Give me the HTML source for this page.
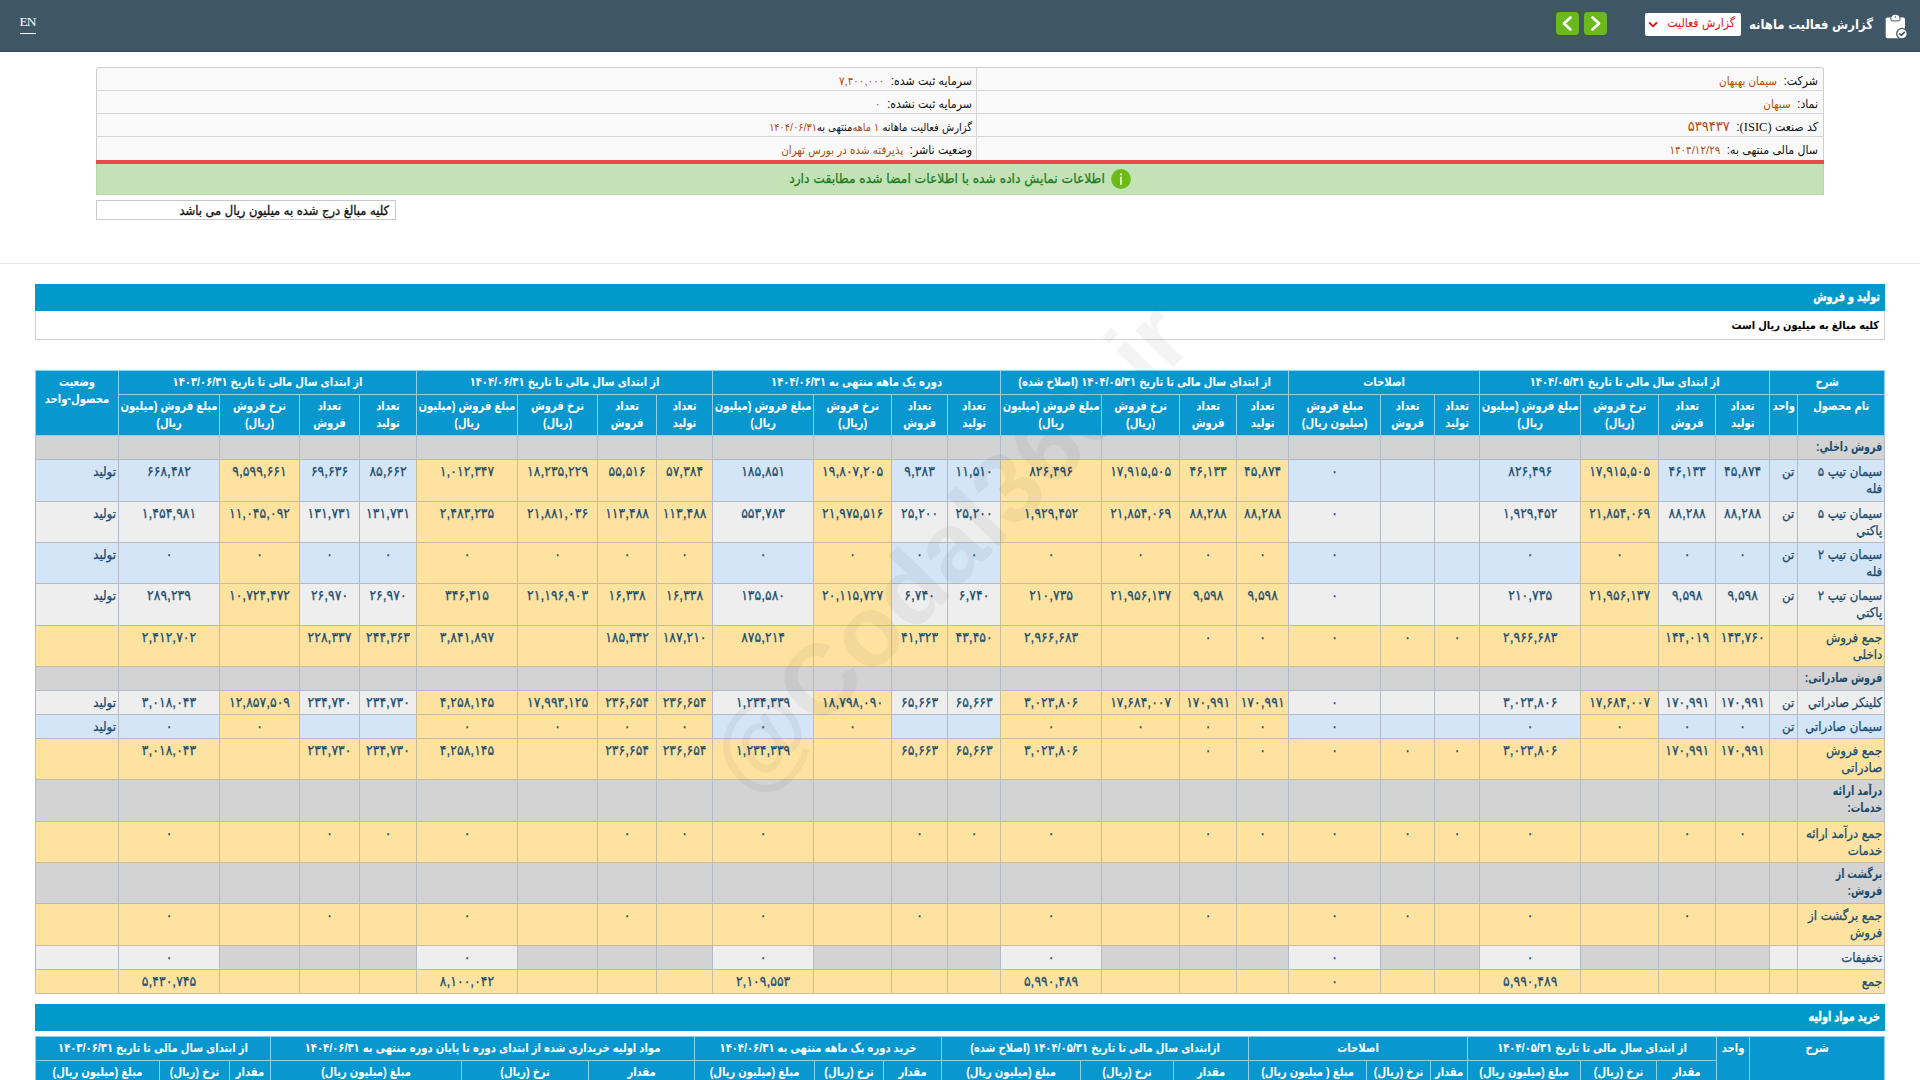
<!DOCTYPE html>
<html lang="fa" dir="rtl">
<head>
<meta charset="utf-8">
<title>گزارش فعالیت ماهانه</title>
<style>
html,body{margin:0;padding:0;}
body{width:1920px;height:1080px;overflow:hidden;position:relative;background:#fff;direction:rtl;
  font-family:"Liberation Sans","DejaVu Sans Condensed","DejaVu Sans",sans-serif;font-size:12px;color:#000;}
#topbar{position:absolute;left:0;top:0;width:1920px;height:51px;background:#3e5665;border-bottom:1px solid #35495a;}
#en{position:absolute;left:20px;top:14px;width:16px;height:19px;border-bottom:1px solid #fff;color:#fff;
  font-family:"Liberation Serif",serif;font-size:13.500px;letter-spacing:-.9px;line-height:15px;text-align:center;direction:ltr;white-space:nowrap;text-indent:-1px;}
#clip{position:absolute;left:1884px;top:13px;}
#title{position:absolute;right:47px;top:13px;height:24px;line-height:24px;color:#fff;font-weight:bold;font-size:13px;white-space:nowrap;}
#sel{z-index:2;position:absolute;left:1645px;top:13px;width:96px;height:23px;background:#fff;border-radius:2px;box-sizing:border-box;}
#sel span{position:absolute;right:6px;top:0;line-height:21px;color:#e01010;font-size:12.200px;white-space:nowrap;}
#sel svg{position:absolute;left:3px;top:8px;}
.nav{position:absolute;top:12px;width:23px;height:23px;background:#6cb81f;border-radius:4px;}
.nav svg{display:block;}
#nav1{left:1584px;}
#nav2{left:1556px;}

#info{position:absolute;left:96px;top:67px;width:1728px;height:93px;box-sizing:border-box;border:1px solid #cfcfcf;border-bottom:none;background:#f9f9f9;border-radius:3px 3px 0 0;}
.irow{position:relative;height:23px;box-sizing:border-box;border-bottom:1px solid #d6d6d6;}
.irow:last-child{border-bottom:none;}
.ir{position:absolute;right:0;top:0;width:847px;height:100%;box-sizing:border-box;padding:4px 5px 0 0;border-left:1px solid #d6d6d6;white-space:nowrap;}
.il{position:absolute;left:0;top:0;width:879px;height:100%;box-sizing:border-box;padding:4px 4px 0 0;white-space:nowrap;}
.lb{color:#111;font-size:12.200px;line-height:18px;}
.vl{color:#b34a14;font-size:11.500px;line-height:18px;margin-right:3px;}
.vl.v0{margin-right:0;}
.sm .lb{font-size:11.100px;}
.sm .vl{font-size:10.800px;}
.vl.vbig{font-size:14.500px;line-height:16px;}
.lat{font-family:"Liberation Serif",serif;font-size:12.500px;}
#redline{position:absolute;left:96px;top:160px;width:1728px;height:4px;background:#e9494b;}
#green{position:absolute;left:96px;top:164px;width:1728px;height:31px;background:#c3e3b6;box-sizing:border-box;border:1px solid #b9d9ac;border-top:none;text-align:center;white-space:nowrap;}
#gi{display:inline-block;vertical-align:middle;width:20px;height:20px;margin-left:6px;margin-top:5px;}
#gt{display:inline-block;vertical-align:middle;margin-top:3px;color:#1f7a1f;font-size:13.700px;-webkit-text-stroke:.25px #1f7a1f;}
#note{position:absolute;left:96px;top:200px;width:300px;height:20px;box-sizing:border-box;border:1px solid #c8c8c8;padding:0 6px 0 0;line-height:19px;font-size:12.800px;-webkit-text-stroke:.3px #111;color:#111;text-align:right;white-space:nowrap;}
#hr{position:absolute;left:0;top:263px;width:1920px;height:1px;background:#e8e8e8;}
.tbar{position:absolute;left:35px;width:1850px;height:27px;background:#0099cc;color:#fff;font-weight:bold;font-size:10.800px;line-height:26px;box-sizing:border-box;padding-right:5px;text-align:right;white-space:nowrap;}
.tbar span{display:inline-block;transform:scaleY(1.220);transform-origin:50% 60%;-webkit-text-stroke:.3px #fff;}
#tb1{top:284px;}
#tb2{top:1004px;}
#sub1{position:absolute;left:35px;top:311px;width:1850px;height:29px;box-sizing:border-box;border:1px solid #d0d0d0;border-top:none;background:#fff;font-weight:bold;font-size:11px;line-height:28px;padding-right:5px;text-align:right;white-space:nowrap;}

table{position:absolute;left:35px;border-collapse:collapse;table-layout:fixed;width:1849px;direction:rtl;}
#t1{top:370px;}
#t2{top:1036px;}
th{background:#0898cf;color:#fff;font-weight:bold;font-size:11.100px;line-height:17px;border:1px solid #8fd0ec;padding:0;text-align:center;vertical-align:middle;overflow:hidden;white-space:nowrap;}
th{position:relative;z-index:3;}
th.vt{vertical-align:top;padding-top:3px;}
th span{display:inline-block;transform:scaleY(1.120);transform-origin:50% 70%;}
tr.h1{height:24px;}
tr.h2{height:41px;}
tr.k1{height:24px;}
tr.k2{height:24px;}
td{border:1px solid #b3bac6;-webkit-text-stroke:.25px #1a4c6e;padding:3px 0 0 0;font-size:13.100px;line-height:17px;color:#1a4c6e;text-align:center;vertical-align:top;overflow:hidden;box-sizing:border-box;white-space:nowrap;}
td.nm,td.sec{text-align:right;padding-right:2px;}
td.st{text-align:right;padding-right:2px;}
td.sec{font-weight:bold;font-size:10.600px;-webkit-text-stroke:0;}
td.sec span{display:inline-block;transform:scaleY(1.200);transform-origin:50% 72%;}
td.v{font-size:13.800px;}
td.un{text-align:right;padding-right:3px;}
td.b{background:#d3e5f6;}
td.g{background:#eeeeee;}
td.y{background:#fee3a0;border-color:#c8bd9c;}
td.s{background:#d3d3d3;}
td.k{background:#d3d3d3;}
#wm{z-index:2;position:absolute;left:598px;top:493px;width:700px;height:110px;line-height:110px;text-align:center;direction:ltr;font-family:"Liberation Sans",sans-serif;font-size:100px;font-weight:bold;color:rgba(0,0,0,.045);transform:rotate(-45.700deg);white-space:nowrap;pointer-events:none;}

</style>
</head>
<body>
<div id="topbar">
  <a id="en">EN</a>
  <svg id="clip" viewBox="0 0 26 28" width="26" height="28"><rect x="1.700" y="4.600" width="19.300" height="20.700" rx="1.700" fill="#fff"/><path d="M7.600 5V4.400a3.800 2.600 0 0 1 7.600 0V5z" fill="#fff"/><path d="M6.900 4.600v2.100a1.200 1.200 0 0 0 1.200 1.200h6.600a1.200 1.200 0 0 0 1.200-1.200V4.600" fill="none" stroke="#3e5665" stroke-width="1"/><circle cx="11.400" cy="4" r=".75" fill="#3e5665"/><circle cx="18" cy="20.700" r="5.900" fill="#3e5665"/><circle cx="18" cy="20.700" r="4.600" fill="#fff"/><path d="M15.800 20.900l1.600 1.500 2.900-3" fill="none" stroke="#3e5665" stroke-width="1.600" stroke-linecap="round" stroke-linejoin="round"/></svg>
  <div id="title">گزارش فعالیت ماهانه</div>
  <div id="sel"><span>گزارش فعالیت</span><svg viewBox="0 0 10 8" width="10" height="8"><path d="M1.600 2L5 5.300L8.400 2" fill="none" stroke="#e01010" stroke-width="1.800" stroke-linecap="round" stroke-linejoin="round"/></svg></div>
  <div class="nav" id="nav1"><svg viewBox="0 0 23 23" width="23" height="23"><path d="M8.500 5.500L15 11.500L8.500 17.500" fill="none" stroke="#fff" stroke-width="2.600" stroke-linecap="round" stroke-linejoin="round"/></svg></div>
  <div class="nav" id="nav2"><svg viewBox="0 0 23 23" width="23" height="23"><path d="M14.500 5.500L8 11.500L14.500 17.500" fill="none" stroke="#fff" stroke-width="2.600" stroke-linecap="round" stroke-linejoin="round"/></svg></div>
</div>
<div id="info">
  <div class="irow"><div class="ir"><span class="lb">شرکت:</span> <span class="vl">سیمان بهبهان</span></div><div class="il"><span class="lb">سرمایه ثبت شده:</span> <span class="vl">۷,۴۰۰,۰۰۰</span></div></div>
  <div class="irow"><div class="ir"><span class="lb">نماد:</span> <span class="vl">سبهان</span></div><div class="il"><span class="lb">سرمایه ثبت نشده:</span> <span class="vl">۰</span></div></div>
  <div class="irow"><div class="ir"><span class="lb">کد صنعت <span class="lat">(ISIC)</span>:</span> <span class="vl vbig">۵۳۹۴۳۷</span></div><div class="il sm"><span class="lb">گزارش فعالیت ماهانه</span> <span class="vl v0">۱ ماهه</span>&zwnj;<span class="lb">منتهی به</span><span class="vl v0">۱۴۰۴/۰۶/۳۱</span></div></div>
  <div class="irow"><div class="ir"><span class="lb">سال مالی منتهی به:</span> <span class="vl">۱۴۰۴/۱۲/۲۹</span></div><div class="il"><span class="lb">وضعیت ناشر:</span> <span class="vl">پذیرفته شده در بورس تهران</span></div></div>
</div>
<div id="redline"></div>
<div id="green"><span id="gi"><svg viewBox="0 0 20 20" width="20" height="20"><circle cx="10" cy="10" r="9.900" fill="#6cbb18"/><circle cx="10" cy="5.300" r="1.100" fill="#dbf3bd"/><rect x="9.050" y="7.600" width="1.900" height="8.600" rx=".7" fill="#dbf3bd"/></svg></span><span id="gt">اطلاعات نمایش داده شده با اطلاعات امضا شده مطابقت دارد</span></div>
<div id="note">کلیه مبالغ درج شده به میلیون ریال می باشد</div>
<div id="hr"></div>
<div class="tbar" id="tb1"><span>تولید و فروش</span></div>
<div id="sub1">کلیه مبالغ به میلیون ریال است</div>
<table id="t1">
<colgroup><col style="width:87px"><col style="width:28px"><col style="width:54px"><col style="width:57px"><col style="width:78px"><col style="width:101px"><col style="width:45px"><col style="width:54px"><col style="width:92px"><col style="width:52px"><col style="width:57px"><col style="width:78px"><col style="width:101px"><col style="width:53px"><col style="width:56px"><col style="width:78px"><col style="width:101px"><col style="width:56px"><col style="width:59px"><col style="width:80px"><col style="width:101px"><col style="width:57px"><col style="width:60px"><col style="width:80px"><col style="width:101px"><col style="width:83px"></colgroup>
<thead>
<tr class="h1"><th colspan="2"><span>شرح</span></th><th colspan="4"><span>از ابتدای سال مالی تا تاریخ ۱۴۰۴/۰۵/۳۱</span></th><th colspan="3"><span>اصلاحات</span></th><th colspan="4"><span>از ابتدای سال مالی تا تاریخ ۱۴۰۴/۰۵/۳۱ (اصلاح شده)</span></th><th colspan="4"><span>دوره یک ماهه منتهی به ۱۴۰۴/۰۶/۳۱</span></th><th colspan="4"><span>از ابتدای سال مالی تا تاریخ ۱۴۰۴/۰۶/۳۱</span></th><th colspan="4"><span>از ابتدای سال مالی تا تاریخ ۱۴۰۳/۰۶/۳۱</span></th><th rowspan="2" class="vt"><span>وضعیت</span><br><span>محصول-واحد</span></th></tr>
<tr class="h2"><th class="vt"><span>نام محصول</span></th><th class="vt"><span>واحد</span></th><th><span>تعداد</span><br><span>تولید</span></th><th><span>تعداد</span><br><span>فروش</span></th><th><span>نرخ فروش</span><br><span>(ریال)</span></th><th><span>مبلغ فروش (میلیون</span><br><span>ریال)</span></th><th><span>تعداد</span><br><span>تولید</span></th><th><span>تعداد</span><br><span>فروش</span></th><th><span>مبلغ فروش</span><br><span>(میلیون ریال)</span></th><th><span>تعداد</span><br><span>تولید</span></th><th><span>تعداد</span><br><span>فروش</span></th><th><span>نرخ فروش</span><br><span>(ریال)</span></th><th><span>مبلغ فروش (میلیون</span><br><span>ریال)</span></th><th><span>تعداد</span><br><span>تولید</span></th><th><span>تعداد</span><br><span>فروش</span></th><th><span>نرخ فروش</span><br><span>(ریال)</span></th><th><span>مبلغ فروش (میلیون</span><br><span>ریال)</span></th><th><span>تعداد</span><br><span>تولید</span></th><th><span>تعداد</span><br><span>فروش</span></th><th><span>نرخ فروش</span><br><span>(ریال)</span></th><th><span>مبلغ فروش (میلیون</span><br><span>ریال)</span></th><th><span>تعداد</span><br><span>تولید</span></th><th><span>تعداد</span><br><span>فروش</span></th><th><span>نرخ فروش</span><br><span>(ریال)</span></th><th><span>مبلغ فروش (میلیون</span><br><span>ریال)</span></th></tr>
</thead>
<tbody>
<tr style="height:24px"><td class="s sec"><span>فروش داخلي:</span></td><td class="s v"></td><td class="s v"></td><td class="s v"></td><td class="s v"></td><td class="s v"></td><td class="s v"></td><td class="s v"></td><td class="s v"></td><td class="s v"></td><td class="s v"></td><td class="s v"></td><td class="s v"></td><td class="s v"></td><td class="s v"></td><td class="s v"></td><td class="s v"></td><td class="s v"></td><td class="s v"></td><td class="s v"></td><td class="s v"></td><td class="s v"></td><td class="s v"></td><td class="s v"></td><td class="s v"></td><td class="s v"></td></tr>
<tr style="height:42px"><td class="b nm">سیمان تیپ ۵<br>فله</td><td class="b un">تن</td><td class="b v">۴۵,۸۷۴</td><td class="b v">۴۶,۱۳۳</td><td class="y v">۱۷,۹۱۵,۵۰۵</td><td class="b v">۸۲۶,۴۹۶</td><td class="b v"></td><td class="b v"></td><td class="b v">۰</td><td class="y v">۴۵,۸۷۴</td><td class="y v">۴۶,۱۳۳</td><td class="y v">۱۷,۹۱۵,۵۰۵</td><td class="y v">۸۲۶,۴۹۶</td><td class="b v">۱۱,۵۱۰</td><td class="b v">۹,۳۸۳</td><td class="y v">۱۹,۸۰۷,۲۰۵</td><td class="b v">۱۸۵,۸۵۱</td><td class="y v">۵۷,۳۸۴</td><td class="y v">۵۵,۵۱۶</td><td class="y v">۱۸,۲۳۵,۲۲۹</td><td class="y v">۱,۰۱۲,۳۴۷</td><td class="b v">۸۵,۶۶۲</td><td class="b v">۶۹,۶۳۶</td><td class="y v">۹,۵۹۹,۶۶۱</td><td class="b v">۶۶۸,۴۸۲</td><td class="b st">تولید</td></tr>
<tr style="height:41px"><td class="g nm">سیمان تیپ ۵<br>پاکتي</td><td class="g un">تن</td><td class="g v">۸۸,۲۸۸</td><td class="g v">۸۸,۲۸۸</td><td class="y v">۲۱,۸۵۴,۰۶۹</td><td class="g v">۱,۹۲۹,۴۵۲</td><td class="g v"></td><td class="g v"></td><td class="g v">۰</td><td class="y v">۸۸,۲۸۸</td><td class="y v">۸۸,۲۸۸</td><td class="y v">۲۱,۸۵۴,۰۶۹</td><td class="y v">۱,۹۲۹,۴۵۲</td><td class="g v">۲۵,۲۰۰</td><td class="g v">۲۵,۲۰۰</td><td class="y v">۲۱,۹۷۵,۵۱۶</td><td class="g v">۵۵۳,۷۸۳</td><td class="y v">۱۱۳,۴۸۸</td><td class="y v">۱۱۳,۴۸۸</td><td class="y v">۲۱,۸۸۱,۰۳۶</td><td class="y v">۲,۴۸۳,۲۳۵</td><td class="g v">۱۳۱,۷۳۱</td><td class="g v">۱۳۱,۷۳۱</td><td class="y v">۱۱,۰۴۵,۰۹۲</td><td class="g v">۱,۴۵۴,۹۸۱</td><td class="g st">تولید</td></tr>
<tr style="height:41px"><td class="b nm">سیمان تیپ ۲<br>فله</td><td class="b un">تن</td><td class="b v">۰</td><td class="b v">۰</td><td class="y v">۰</td><td class="b v">۰</td><td class="b v"></td><td class="b v"></td><td class="b v">۰</td><td class="y v">۰</td><td class="y v">۰</td><td class="y v">۰</td><td class="y v">۰</td><td class="b v">۰</td><td class="b v">۰</td><td class="y v">۰</td><td class="b v">۰</td><td class="y v">۰</td><td class="y v">۰</td><td class="y v">۰</td><td class="y v">۰</td><td class="b v">۰</td><td class="b v">۰</td><td class="y v">۰</td><td class="b v">۰</td><td class="b st">تولید</td></tr>
<tr style="height:42px"><td class="g nm">سیمان تیپ ۲<br>پاکتي</td><td class="g un">تن</td><td class="g v">۹,۵۹۸</td><td class="g v">۹,۵۹۸</td><td class="y v">۲۱,۹۵۶,۱۳۷</td><td class="g v">۲۱۰,۷۳۵</td><td class="g v"></td><td class="g v"></td><td class="g v">۰</td><td class="y v">۹,۵۹۸</td><td class="y v">۹,۵۹۸</td><td class="y v">۲۱,۹۵۶,۱۳۷</td><td class="y v">۲۱۰,۷۳۵</td><td class="g v">۶,۷۴۰</td><td class="g v">۶,۷۴۰</td><td class="y v">۲۰,۱۱۵,۷۲۷</td><td class="g v">۱۳۵,۵۸۰</td><td class="y v">۱۶,۳۳۸</td><td class="y v">۱۶,۳۳۸</td><td class="y v">۲۱,۱۹۶,۹۰۳</td><td class="y v">۳۴۶,۳۱۵</td><td class="g v">۲۶,۹۷۰</td><td class="g v">۲۶,۹۷۰</td><td class="y v">۱۰,۷۲۴,۴۷۲</td><td class="g v">۲۸۹,۲۳۹</td><td class="g st">تولید</td></tr>
<tr style="height:41px"><td class="y nm">جمع فروش<br>داخلی</td><td class="y un"></td><td class="y v">۱۴۳,۷۶۰</td><td class="y v">۱۴۴,۰۱۹</td><td class="y v"></td><td class="y v">۲,۹۶۶,۶۸۳</td><td class="y v">۰</td><td class="y v">۰</td><td class="y v">۰</td><td class="y v">۰</td><td class="y v">۰</td><td class="y v"></td><td class="y v">۲,۹۶۶,۶۸۳</td><td class="y v">۴۳,۴۵۰</td><td class="y v">۴۱,۳۲۳</td><td class="y v"></td><td class="y v">۸۷۵,۲۱۴</td><td class="y v">۱۸۷,۲۱۰</td><td class="y v">۱۸۵,۳۴۲</td><td class="y v"></td><td class="y v">۳,۸۴۱,۸۹۷</td><td class="y v">۲۴۴,۳۶۳</td><td class="y v">۲۲۸,۳۳۷</td><td class="y v"></td><td class="y v">۲,۴۱۲,۷۰۲</td><td class="y st"></td></tr>
<tr style="height:24px"><td class="s sec"><span>فروش صادراتی:</span></td><td class="s v"></td><td class="s v"></td><td class="s v"></td><td class="s v"></td><td class="s v"></td><td class="s v"></td><td class="s v"></td><td class="s v"></td><td class="s v"></td><td class="s v"></td><td class="s v"></td><td class="s v"></td><td class="s v"></td><td class="s v"></td><td class="s v"></td><td class="s v"></td><td class="s v"></td><td class="s v"></td><td class="s v"></td><td class="s v"></td><td class="s v"></td><td class="s v"></td><td class="s v"></td><td class="s v"></td><td class="s v"></td></tr>
<tr style="height:24px"><td class="g nm">کلینکر صادراتي</td><td class="g un">تن</td><td class="g v">۱۷۰,۹۹۱</td><td class="g v">۱۷۰,۹۹۱</td><td class="y v">۱۷,۶۸۴,۰۰۷</td><td class="g v">۳,۰۲۳,۸۰۶</td><td class="g v"></td><td class="g v"></td><td class="g v">۰</td><td class="y v">۱۷۰,۹۹۱</td><td class="y v">۱۷۰,۹۹۱</td><td class="y v">۱۷,۶۸۴,۰۰۷</td><td class="y v">۳,۰۲۳,۸۰۶</td><td class="g v">۶۵,۶۶۳</td><td class="g v">۶۵,۶۶۳</td><td class="y v">۱۸,۷۹۸,۰۹۰</td><td class="g v">۱,۲۳۴,۳۳۹</td><td class="y v">۲۳۶,۶۵۴</td><td class="y v">۲۳۶,۶۵۴</td><td class="y v">۱۷,۹۹۳,۱۲۵</td><td class="y v">۴,۲۵۸,۱۴۵</td><td class="g v">۲۳۴,۷۳۰</td><td class="g v">۲۳۴,۷۳۰</td><td class="y v">۱۲,۸۵۷,۵۰۹</td><td class="g v">۳,۰۱۸,۰۴۳</td><td class="g st">تولید</td></tr>
<tr style="height:24px"><td class="b nm">سیمان صادراتي</td><td class="b un">تن</td><td class="b v">۰</td><td class="b v">۰</td><td class="y v">۰</td><td class="b v">۰</td><td class="b v"></td><td class="b v"></td><td class="b v">۰</td><td class="y v">۰</td><td class="y v">۰</td><td class="y v">۰</td><td class="y v">۰</td><td class="b v"></td><td class="b v"></td><td class="y v">۰</td><td class="b v">۰</td><td class="y v">۰</td><td class="y v">۰</td><td class="y v">۰</td><td class="y v">۰</td><td class="b v"></td><td class="b v"></td><td class="y v">۰</td><td class="b v">۰</td><td class="b st">تولید</td></tr>
<tr style="height:41px"><td class="y nm">جمع فروش<br>صادراتی</td><td class="y un"></td><td class="y v">۱۷۰,۹۹۱</td><td class="y v">۱۷۰,۹۹۱</td><td class="y v"></td><td class="y v">۳,۰۲۳,۸۰۶</td><td class="y v">۰</td><td class="y v">۰</td><td class="y v">۰</td><td class="y v">۰</td><td class="y v">۰</td><td class="y v"></td><td class="y v">۳,۰۲۳,۸۰۶</td><td class="y v">۶۵,۶۶۳</td><td class="y v">۶۵,۶۶۳</td><td class="y v"></td><td class="y v">۱,۲۳۴,۳۳۹</td><td class="y v">۲۳۶,۶۵۴</td><td class="y v">۲۳۶,۶۵۴</td><td class="y v"></td><td class="y v">۴,۲۵۸,۱۴۵</td><td class="y v">۲۳۴,۷۳۰</td><td class="y v">۲۳۴,۷۳۰</td><td class="y v"></td><td class="y v">۳,۰۱۸,۰۴۳</td><td class="y st"></td></tr>
<tr style="height:42px"><td class="s sec"><span>درآمد ارائه</span><br><span>خدمات:</span></td><td class="s v"></td><td class="s v"></td><td class="s v"></td><td class="s v"></td><td class="s v"></td><td class="s v"></td><td class="s v"></td><td class="s v"></td><td class="s v"></td><td class="s v"></td><td class="s v"></td><td class="s v"></td><td class="s v"></td><td class="s v"></td><td class="s v"></td><td class="s v"></td><td class="s v"></td><td class="s v"></td><td class="s v"></td><td class="s v"></td><td class="s v"></td><td class="s v"></td><td class="s v"></td><td class="s v"></td><td class="s v"></td></tr>
<tr style="height:41px"><td class="y nm">جمع درآمد ارائه<br>خدمات</td><td class="y un"></td><td class="y v">۰</td><td class="y v">۰</td><td class="y v"></td><td class="y v">۰</td><td class="y v">۰</td><td class="y v">۰</td><td class="y v">۰</td><td class="y v">۰</td><td class="y v">۰</td><td class="y v"></td><td class="y v">۰</td><td class="y v">۰</td><td class="y v">۰</td><td class="y v"></td><td class="y v">۰</td><td class="y v">۰</td><td class="y v">۰</td><td class="y v"></td><td class="y v">۰</td><td class="y v">۰</td><td class="y v">۰</td><td class="y v"></td><td class="y v">۰</td><td class="y st"></td></tr>
<tr style="height:41px"><td class="s sec"><span>برگشت از</span><br><span>فروش:</span></td><td class="s v"></td><td class="s v"></td><td class="s v"></td><td class="s v"></td><td class="s v"></td><td class="s v"></td><td class="s v"></td><td class="s v"></td><td class="s v"></td><td class="s v"></td><td class="s v"></td><td class="s v"></td><td class="s v"></td><td class="s v"></td><td class="s v"></td><td class="s v"></td><td class="s v"></td><td class="s v"></td><td class="s v"></td><td class="s v"></td><td class="s v"></td><td class="s v"></td><td class="s v"></td><td class="s v"></td><td class="s v"></td></tr>
<tr style="height:42px"><td class="y nm">جمع برگشت از<br>فروش</td><td class="y un"></td><td class="y v"></td><td class="y v">۰</td><td class="y v"></td><td class="y v">۰</td><td class="y v"></td><td class="y v">۰</td><td class="y v">۰</td><td class="y v"></td><td class="y v">۰</td><td class="y v"></td><td class="y v">۰</td><td class="y v"></td><td class="y v">۰</td><td class="y v"></td><td class="y v">۰</td><td class="y v"></td><td class="y v">۰</td><td class="y v"></td><td class="y v">۰</td><td class="y v"></td><td class="y v">۰</td><td class="y v"></td><td class="y v">۰</td><td class="y st"></td></tr>
<tr style="height:24px"><td class="g nm">تخفیفات</td><td class="g un"></td><td class="k v"></td><td class="k v"></td><td class="k v"></td><td class="g v">۰</td><td class="k v"></td><td class="k v"></td><td class="g v">۰</td><td class="k v"></td><td class="k v"></td><td class="k v"></td><td class="g v">۰</td><td class="k v"></td><td class="k v"></td><td class="k v"></td><td class="g v">۰</td><td class="k v"></td><td class="k v"></td><td class="k v"></td><td class="g v">۰</td><td class="k v"></td><td class="k v"></td><td class="k v"></td><td class="g v">۰</td><td class="g st"></td></tr>
<tr style="height:24px"><td class="y nm">جمع</td><td class="y un"></td><td class="y v"></td><td class="y v"></td><td class="y v"></td><td class="y v">۵,۹۹۰,۴۸۹</td><td class="y v"></td><td class="y v"></td><td class="y v">۰</td><td class="y v"></td><td class="y v"></td><td class="y v"></td><td class="y v">۵,۹۹۰,۴۸۹</td><td class="y v"></td><td class="y v"></td><td class="y v"></td><td class="y v">۲,۱۰۹,۵۵۳</td><td class="y v"></td><td class="y v"></td><td class="y v"></td><td class="y v">۸,۱۰۰,۰۴۲</td><td class="y v"></td><td class="y v"></td><td class="y v"></td><td class="y v">۵,۴۳۰,۷۴۵</td><td class="y st"></td></tr>
</tbody>
</table>
<div class="tbar" id="tb2"><span>خرید مواد اولیه</span></div>
<table id="t2">
<colgroup><col style="width:135px"><col style="width:33px"><col style="width:60px"><col style="width:76px"><col style="width:113px"><col style="width:37px"><col style="width:64px"><col style="width:118px"><col style="width:75px"><col style="width:93px"><col style="width:139px"><col style="width:58px"><col style="width:69px"><col style="width:120px"><col style="width:106px"><col style="width:127px"><col style="width:191px"><col style="width:41px"><col style="width:70px"><col style="width:124px"></colgroup>
<thead>
<tr class="k1"><th rowspan="2" class="vt"><span>شرح</span></th><th rowspan="2" class="vt"><span>واحد</span></th><th colspan="3"><span>از ابتدای سال مالی تا تاریخ ۱۴۰۴/۰۵/۳۱</span></th><th colspan="3"><span>اصلاحات</span></th><th colspan="3"><span>ازابتدای سال مالی تا تاریخ ۱۴۰۴/۰۵/۳۱ (اصلاح شده)</span></th><th colspan="3"><span>خرید دوره یک ماهه منتهی به ۱۴۰۴/۰۶/۳۱</span></th><th colspan="3"><span>مواد اولیه خریداری شده از ابتدای دوره تا پایان دوره منتهی به ۱۴۰۴/۰۶/۳۱</span></th><th colspan="3"><span>از ابتدای سال مالی تا تاریخ ۱۴۰۳/۰۶/۳۱</span></th></tr>
<tr class="k2"><th><span>مقدار</span></th><th><span>نرخ (ریال)</span></th><th><span>مبلغ (میلیون ریال)</span></th><th><span>مقدار</span></th><th><span>نرخ (ریال)</span></th><th><span>مبلغ ( میلیون ریال)</span></th><th><span>مقدار</span></th><th><span>نرخ (ریال)</span></th><th><span>مبلغ (میلیون ریال)</span></th><th><span>مقدار</span></th><th><span>نرخ (ریال)</span></th><th><span>مبلغ (میلیون ریال)</span></th><th><span>مقدار</span></th><th><span>نرخ (ریال)</span></th><th><span>مبلغ (میلیون ریال)</span></th><th><span>مقدار</span></th><th><span>نرخ (ریال)</span></th><th><span>مبلغ (میلیون ریال)</span></th></tr>
</thead>
</table>
<div id="wm">@Codal360.ir</div>
</body>
</html>
